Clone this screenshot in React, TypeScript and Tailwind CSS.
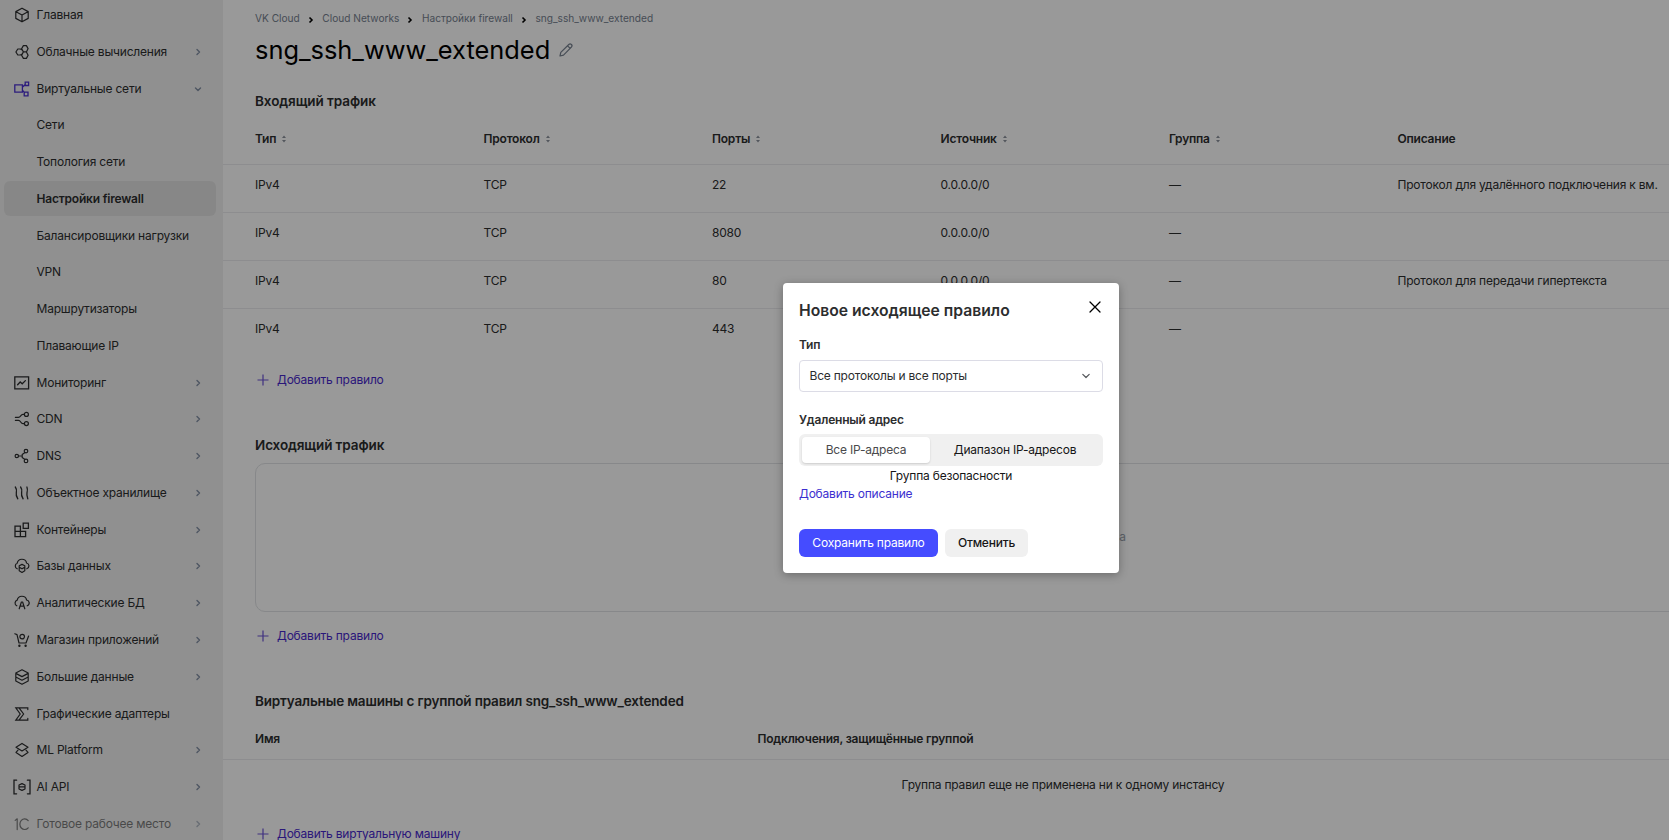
import React from "react";

const stroke = {
  fill: "none",
  stroke: "currentColor",
  strokeWidth: 1.2,
  strokeLinecap: "round" as const,
  strokeLinejoin: "round" as const,
};

function Icon({ name }: { name: string }) {
  return (
    <svg viewBox="0 0 16 16" className="size-4 shrink-0 overflow-visible" {...stroke}>
      {icons[name]}
    </svg>
  );
}

const icons: Record<string, React.ReactNode> = {
  cube: <path d="M8 1.2 14.2 4.6v6.8L8 14.8 1.8 11.4V4.6zM2 4.8 8 8l6-3.2M8 8v6.6" />,
  compute: (
    <>
      <path d="M7.6 5.600 6.400 5H3.800L1.900 8l1.900 3h2.600l1.200-.6" />
      <path d="M9.400 1.600h3l1.700 3-1.700 3.300h-3L7.600 4.700zM9.400 7.900h3l1.700 3.300-1.700 3.200h-3l-1.800-3.200z" />
    </>
  ),
  network: (
    <path
      strokeWidth="1.3"
      strokeLinejoin="miter"
      d="M.8 3.800h7.600v7.400H.8zM11.200 1.200h3.400v3.300h-3.400zM10.200 11.200h3.800v3.600h-3.800zM8.400 6.200l2.800-2.600M8.400 9.200l2 2.200"
    />
  ),
  monitor: <path strokeWidth="1.3" strokeLinejoin="miter" d="M.8 1.800h13.800v12H.8zM3.600 9.800 6.200 7l2 1.800 3.200-3.200" />,
  cdn: (
    <>
      <circle cx="12.400" cy="3.400" r="2" />
      <circle cx="12.400" cy="12.600" r="2" />
      <path d="M10.400 3.400H9c-2.600 0-2 3-4.600 3H1.400M10.400 12.600H9c-2.600 0-2-3.200-4.600-3.200H1.400" />
    </>
  ),
  dns: (
    <>
      <circle cx="2.800" cy="8" r="1.700" />
      <circle cx="12" cy="3.100" r="1.800" />
      <circle cx="12" cy="12.900" r="1.800" />
      <path d="M4.600 8h2.600M11 4.600 8.200 6.600v2.800l2.800 2" />
    </>
  ),
  storage: (
    <path
      strokeWidth="1.3"
      d="M1.300 2C3.200 4.600 2.800 5.600 2.300 7.600s.2 4 1.500 6.200M6.600 2c1.900 2.600 1.500 3.600 1 5.600s.2 4 1.500 6.200M12.900 2c1 2.600.6 3.600.1 5.600s.2 4 .8 6.200"
    />
  ),
  containers: (
    <path strokeWidth="1.3" strokeLinejoin="miter" d="M1 4.200h5.400v10.400H1zM1 9.400h10.600v5.200H6.400V9.400M9.200 1.200h5.200v5.200H9.200z" />
  ),
  db: (
    <>
      <path d="M3.200 10.800A3 3 0 0 1 3.200 5.200 4.800 4.800 0 0 1 12.600 5a3 3 0 0 1 .2 5.800" />
      <path d="M8 6.400l2.800 1.400v5L8 14.400l-2.800-1.600v-5zM5.400 9.400 8 10.800l2.600-1.400" />
    </>
  ),
  analytics: (
    <>
      <path d="M2.800 10.800A3 3 0 0 1 3.200 5.200 4.800 4.800 0 0 1 12.600 5a3 3 0 0 1 .6 5.800" />
      <path d="M5.200 13.800 7.400 7h1.200l2.200 6.800M6 11.200h4" />
    </>
  ),
  cart: (
    <>
      <path d="m.8 1.800 2.200.8 2 8.400h7L14.600 4" />
      <circle cx="8.200" cy="4.600" r="2.300" />
      <circle cx="5.400" cy="13.800" r=".6" fill="currentColor" />
      <circle cx="11.600" cy="13.800" r=".6" fill="currentColor" />
    </>
  ),
  bigdata: (
    <path d="M8 .8 14.200 4v8L8 15.200 1.800 12V4zM1.800 4.400 8 7.600l6.200-3.200M1.800 8 8 11.200 14.200 8" />
  ),
  gpu: <path strokeLinejoin="miter" d="M13.800 3.600V1.800H1.800L6.200 8l-4.400 6.200h12v-1.800M5 1.800 9.600 8 5 14.200" />,
  ml: <path d="M8 1.400 14 5.200 8 9 2 5.200zM4 8.200 2 10.400 8 14.400l6-4-2-2.200" />,
  ai: (
    <>
      <path strokeWidth="1.300" strokeLinejoin="miter" d="M2.600 1.200H0v13.600h2.600M13.400 1.200H16v13.600h-2.600" />
      <path d="M8 4.600 11 6v4L8 11.400 5 10V6zM5 7.800h6" />
    </>
  ),
  onec: <path d="M1.200 4.400 3.200 2.800v10.800M14.200 4.600A4.800 5.300 0 1 0 14.200 11.800" />,
};

function Chevron({ down = false }: { down?: boolean }) {
  return (
    <svg viewBox="0 0 8 8" className="size-2 shrink-0 text-[#8290a4]" {...stroke} strokeWidth={1.4}>
      <path d={down ? "M1.500 3 4 5.400 6.500 3" : "M3 1.500 5.500 4 3 6.500"} />
    </svg>
  );
}

type Item = { label: string; icon?: string; arrow?: "right" | "down"; active?: boolean; faded?: boolean };

const items: Item[] = [
  { label: "Главная", icon: "cube" },
  { label: "Облачные вычисления", icon: "compute", arrow: "right" },
  { label: "Виртуальные сети", icon: "network", arrow: "down" },
  { label: "Сети" },
  { label: "Топология сети" },
  { label: "Настройки firewall", active: true },
  { label: "Балансировщики нагрузки" },
  { label: "VPN" },
  { label: "Маршрутизаторы" },
  { label: "Плавающие IP" },
  { label: "Мониторинг", icon: "monitor", arrow: "right" },
  { label: "CDN", icon: "cdn", arrow: "right" },
  { label: "DNS", icon: "dns", arrow: "right" },
  { label: "Объектное хранилище", icon: "storage", arrow: "right" },
  { label: "Контейнеры", icon: "containers", arrow: "right" },
  { label: "Базы данных", icon: "db", arrow: "right" },
  { label: "Аналитические БД", icon: "analytics", arrow: "right" },
  { label: "Магазин приложений", icon: "cart", arrow: "right" },
  { label: "Большие данные", icon: "bigdata", arrow: "right" },
  { label: "Графические адаптеры", icon: "gpu" },
  { label: "ML Platform", icon: "ml", arrow: "right" },
  { label: "AI API", icon: "ai", arrow: "right" },
  { label: "Готовое рабочее место", icon: "onec", arrow: "right", faded: true },
];

function Sidebar() {
  return (
    <nav className="flex h-full w-[223px] shrink-0 flex-col overflow-hidden bg-[#f0f0f0] px-1 text-[#2c2d2e]">
      <div className="-mt-[3.400px] flex flex-col">
        {items.map((it) => (
          <div key={it.label} className="flex h-[36.770px] w-[212px] shrink-0 items-center">
            <div
              className={`flex h-[35px] w-full items-center rounded-md pr-3.5 pl-2.5 ${it.active ? "bg-[#e2e2e2] font-semibold" : ""} ${it.faded ? "opacity-60" : ""}`}
            >
              <span className={`flex w-[22.500px] shrink-0 ${it.arrow === "down" ? "text-[#4a2fd0]" : ""}`}>
                {it.icon && <Icon name={it.icon} />}
              </span>
              <span className="flex-1 whitespace-nowrap">{it.label}</span>
              {it.arrow && <Chevron down={it.arrow === "down"} />}
            </div>
          </div>
        ))}
      </div>
    </nav>
  );
}

function Sort() {
  return (
    <svg viewBox="0 0 6 8" className="ml-[5px] h-2 w-1.5 fill-[#8a919c]">
      <path d="M3 .500 5 3H1zM3 7.500 5 5H1z" />
    </svg>
  );
}

const columns = ["Тип", "Протокол", "Порты", "Источник", "Группа", "Описание"];
const rows = [
  ["IPv4", "TCP", "22", "0.0.0.0/0", "—", "Протокол для удалённого подключения к вм."],
  ["IPv4", "TCP", "8080", "0.0.0.0/0", "—", ""],
  ["IPv4", "TCP", "80", "0.0.0.0/0", "—", "Протокол для передачи гипертекста"],
  ["IPv4", "TCP", "443", "", "—", ""],
];

function AddLink({ children }: { children: React.ReactNode }) {
  return (
    <div className="ml-8 flex h-5 items-center text-[#4728cc]">
      <svg viewBox="0 0 16 16" className="size-4 opacity-80" {...stroke} strokeLinecap="butt" strokeWidth={1.2}>
        <path d="M8 2.500v11M2.500 8h11" />
      </svg>
      <span className="ml-1.5">{children}</span>
    </div>
  );
}

const crumbs = ["VK Cloud", "Cloud Networks", "Настройки firewall", "sng_ssh_www_extended"];

function Main() {
  return (
    <main className="flex h-full min-w-0 flex-1 flex-col overflow-hidden whitespace-nowrap text-[#2c2d2e] *:shrink-0">
      <div className="mt-2 ml-8 flex h-5 items-center text-[10.150px] tracking-normal text-[#76818f]">
        {crumbs.map((c, i) => (
          <React.Fragment key={c}>
            {i > 0 && (
              <svg viewBox="0 0 8 8" className="mt-1 mr-[7.600px] ml-[7px] size-2 text-black" {...stroke} strokeLinecap="butt" strokeLinejoin="miter" strokeWidth={1.6}>
                <path d="M2.500 1.500 5 4 2.500 6.500" />
              </svg>
            )}
            <span>{c}</span>
          </React.Fragment>
        ))}
      </div>
      <div className="ml-8 flex h-11 items-center">
        <h1 className="text-[25.400px] tracking-normal text-black">sng_ssh_www_extended</h1>
        <svg viewBox="0 0 14 14" className="ml-[9px] size-3.5 text-[#76818f]" {...stroke}>
          <path d="m1 13 .8-3.600L9.800 1.500a1.800 1.800 0 0 1 2.600 2.600L4.500 12.200zM8.600 2.800l2.600 2.600" />
        </svg>
      </div>
      <h2 className="mt-[19px] ml-8 flex h-5 items-center text-[13.500px] font-semibold tracking-[-0.006em]">Входящий трафик</h2>
      <div className="mt-[3px] flex h-[51px] items-center border-b border-[#ebecee] pl-8 font-semibold">
        {columns.map((c, i) => (
          <div key={c} className="flex w-[228.500px] shrink-0 items-center">
            {c}
            {i < 5 && <Sort />}
          </div>
        ))}
      </div>
      {rows.map((r, i) => (
        <div key={i} className={`flex h-12 items-start pt-2.5 pl-8 ${i < 3 ? "border-b border-[#ebecee]" : ""}`}>
          {r.map((v, j) => (
            <div key={j} className="w-[228.500px] shrink-0 leading-5">
              {v}
            </div>
          ))}
        </div>
      ))}
      <div className="mt-[13px]">
        <AddLink>Добавить правило</AddLink>
      </div>
      <h2 className="mt-[45px] ml-8 flex h-5 items-center text-[13.500px] font-semibold tracking-[-0.008em]">Исходящий трафик</h2>
      <div className="mt-2 ml-8 flex h-[149px] w-[1616px] items-center justify-center rounded-[10px] border border-[#e1e3e6]">
        <span className="pb-0.5 pl-[119px] text-[#99a2ad]">а</span>
      </div>
      <div className="mt-[14px]">
        <AddLink>Добавить правило</AddLink>
      </div>
      <h2 className="mt-[45px] ml-8 flex h-5 items-center text-[13.500px] font-semibold tracking-[-0.012em]">
        Виртуальные машины с группой правил sng_ssh_www_extended
      </h2>
      <div className="mt-[7px] flex h-[42px] items-center border-b border-[#ebecee] pl-8 font-semibold">
        <div className="w-[502.500px]">Имя</div>
        <div>Подключения, защищённые группой</div>
      </div>
      <div className="mt-[15px] flex h-5 w-[1680px] items-center justify-center">
        Группа правил еще не применена ни к одному инстансу
      </div>
      <div className="mt-[29px]">
        <AddLink>Добавить виртуальную машину</AddLink>
      </div>
    </main>
  );
}

function Modal() {
  return (
    <div className="absolute top-[283px] left-[783px] flex h-[290px] w-[336px] flex-col rounded bg-white px-4 text-[#2c2d2e] shadow-[0_2px_10px_rgba(0,0,0,0.3)]">
      <div className="mt-4 flex h-6 items-center justify-between">
        <h3 className="text-[15.700px] font-semibold tracking-normal">Новое исходящее правило</h3>
        <svg viewBox="0 0 12 12" className="-mt-2 mr-0.5 size-3 text-black" {...stroke} strokeWidth={1.3}>
          <path d="m1 1 10 10M11 1 1 11" />
        </svg>
      </div>
      <div className="mt-3 flex h-5 items-center font-semibold">Тип</div>
      <div className="mt-[5px] flex h-8 items-center justify-between rounded-[4px] border border-[#dcdce6] pr-3 pl-[9.500px]">
        <span>Все протоколы и все порты</span>
        <svg viewBox="0 0 8 6" className="h-1.5 w-2 text-[#55585c]" {...stroke}>
          <path d="M.8 1.300 4 4.500l3.200-3.200" />
        </svg>
      </div>
      <div className="mt-[18px] flex h-5 items-center font-semibold">Удаленный адрес</div>
      <div className="mt-1 flex h-8 items-center rounded-md bg-[#f0f0f0] px-[3px]">
        <div className="flex h-[26px] w-32 items-center justify-center rounded bg-white text-[#4a4a4c] shadow-[0_1px_2px_rgba(0,0,0,0.15)]">
          Все IP-адреса
        </div>
        <div className="flex flex-1 items-center justify-center text-[#161617]">Диапазон IP-адресов</div>
      </div>
      <div className="flex h-5 items-center justify-center text-[#161617]">Группа безопасности</div>
      <div className="flex h-4 items-center text-[#3c2fd0]">Добавить описание</div>
      <div className="mt-[27px] flex gap-[7px]">
        <button className="flex h-7 w-[139px] items-center justify-center rounded-md bg-[#454cff] text-white">Сохранить правило</button>
        <button className="flex h-7 w-[83px] items-center justify-center rounded-md bg-[#f0f0f0] font-medium text-[#161617]">Отменить</button>
      </div>
    </div>
  );
}

export default function App() {
  return (
    <div className="relative flex h-[840px] w-full overflow-hidden bg-white font-['Inter',sans-serif] text-[12px] leading-5 tracking-[-0.017em]">
      <Sidebar />
      <Main />
      <div className="absolute inset-0 bg-black/40" />
      <Modal />
    </div>
  );
}
